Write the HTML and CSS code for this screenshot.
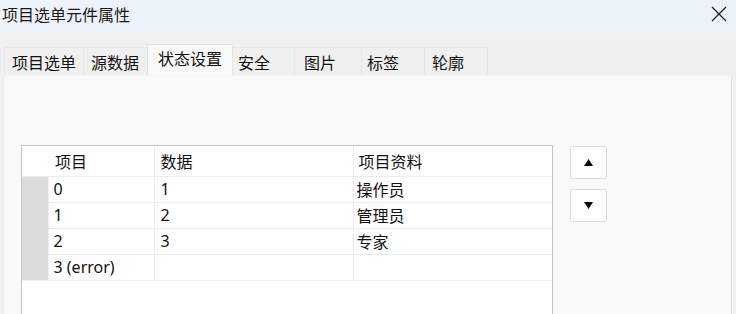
FILE: index.html
```html
<!DOCTYPE html>
<html lang="zh">
<head>
<meta charset="utf-8">
<link rel="stylesheet" href="styles.css">
</head>
<body>
<div class="window">
  <div class="titlebar">
    <span class="title">项目选单元件属性</span>
    <span class="close" aria-label="close">
      <svg width="16" height="16" viewBox="0 0 16 16"><path d="M1 1 L15 15 M15 1 L1 15" stroke="#1a1a1a" stroke-width="1.2" fill="none"/></svg>
    </span>
  </div>
  <div class="tabs">
    <div class="tab t1">项目选单</div>
    <div class="tab t2">源数据</div>
    <div class="tab t3 active">状态设置</div>
    <div class="tab t4">安全</div>
    <div class="tab t5">图片</div>
    <div class="tab t6">标签</div>
    <div class="tab t7">轮廓</div>
  </div>
  <div class="panel">
    <div class="grid-wrap">
      <table class="grid">
        <colgroup>
          <col class="c0"><col class="c1"><col class="c2"><col class="c3">
        </colgroup>
        <thead>
          <tr><th class="rh-blank"></th><th>项目</th><th>数据</th><th>项目资料</th></tr>
        </thead>
        <tbody>
          <tr><td class="rh"></td><td>0</td><td>1</td><td>操作员</td></tr>
          <tr><td class="rh"></td><td>1</td><td>2</td><td>管理员</td></tr>
          <tr><td class="rh"></td><td>2</td><td>3</td><td>专家</td></tr>
          <tr><td class="rh"></td><td>3 (error)</td><td></td><td></td></tr>
        </tbody>
      </table>
    </div>
    <div class="movers">
      <button class="mv"><svg width="9" height="7" viewBox="0 0 9 7"><path d="M4.5 0 L9 7 L0 7 Z" fill="#000"/></svg></button>
      <button class="mv"><svg width="9" height="7" viewBox="0 0 9 7"><path d="M0 0 L9 0 L4.5 7 Z" fill="#000"/></svg></button>
    </div>
  </div>
</div>
</body>
</html>
```

FILE: styles.css
```css
* { box-sizing: border-box; }
html, body {
  margin: 0;
  padding: 0;
  width: 736px;
  height: 314px;
  overflow: hidden;
  background: #f0f0f0;
  font-family: "Noto Sans", "Noto Sans CJK SC", sans-serif;
  color: #111;
}
.window {
  display: flex;
  flex-direction: column;
  height: 314px;
  overflow: hidden;
}
.titlebar {
  height: 33px;
  background: #edf3fa;
  display: flex;
  align-items: flex-start;
  justify-content: space-between;
  padding: 3px 9px 0 2px;
  flex: none;
}
.title {
  font-family: "Noto Sans CJK SC", sans-serif;
  font-size: 16px;
  line-height: 22px;
  color: #1a1a1a;
}
.close {
  display: block;
  width: 16px;
  height: 16px;
  margin-top: 3px;
}
.close svg { display: block; }
.tabs {
  display: flex;
  align-items: flex-end;
  padding-left: 4px;
  margin-top: 11px;
  height: 31px;
  flex: none;
}
.tab {
  font-family: "Noto Sans CJK SC", sans-serif;
  font-size: 16px;
  height: 28px;
  line-height: 28px;
  text-align: left;
  background: #f0f0f0;
  border-top: 1px solid #e6e6e6;
  border-right: 1px solid #e6e6e6;
  color: #111;
  padding-top: 0;
  white-space: nowrap;
}
.tab.t1 { width: 80px; border-left: 1px solid #e6e6e6; padding-left: 7px; }
.tab.t2 { width: 64px; padding-left: 7px; }
.tab.t3 { width: 85px; }
.tab.t4 { width: 62px; padding-left: 5px; }
.tab.t5 { width: 67px; padding-left: 9px; }
.tab.t6 { width: 63px; padding-left: 5px; }
.tab.t7 { width: 63px; padding-left: 7px; }
.tab.active {
  height: 31px;
  line-height: 27px;
  padding-left: 10px;
  background: #f9f9f9;
  border-top: 1px solid #e2e2e2;
  border-left: 1px solid #e2e2e2;
  margin-left: -1px;
  width: 86px;
}
.panel {
  flex: 1;
  margin-left: 4px;
  width: 728px;
  background: #f9f9f9;
  border-top: 1px solid #f5f5f5;
  border-right: 1px solid #e2e2e2;
  border-left: 1px solid #f5f5f5;
  display: flex;
  align-items: flex-start;
  padding: 69px 0 0 16px;
  min-height: 0;
}
.grid-wrap {
  width: 532px;
  height: 200px;
  background: #fff;
  border: 1px solid #c4c4c4;
  flex: none;
}
.grid {
  border-collapse: collapse;
  table-layout: fixed;
  width: 530px;
  font-size: 16px;
}
.c0 { width: 26px; }
.c1 { width: 106px; }
.c2 { width: 199px; }
.c3 { width: 199px; }
.grid th, .grid td {
  height: 26px;
  padding: 0 0 0 6px;
  text-align: left;
  font-weight: normal;
  border-right: 1px solid #ececec;
  border-bottom: 1px solid #ececec;
  white-space: nowrap;
  line-height: 24px;
  color: #111;
}
.grid th {
  height: 30px;
  padding-left: 6px;
  font-family: "Noto Sans CJK SC", sans-serif;
  line-height: 28px;
}
.grid th:nth-child(2) { padding-left: 7px; }
.grid td:nth-child(2) { padding-left: 5px; }
.grid td:nth-child(3), .grid th:nth-child(3) { padding-left: 6px; }
.grid td:nth-child(4) { padding-left: 3px; font-family: "Noto Sans CJK SC", sans-serif; }
.grid th:nth-child(4) { padding-left: 5px; }
.grid th.rh-blank { border-right: none; }
.grid td.rh {
  background: #dcdcdc;
  border-right: 1px solid #f0f0f0;
  border-bottom: 1px solid #dcdcdc;
  padding: 0;
}
.grid tbody tr:last-child td.rh { border-bottom-color: #f0f0f0; }
.grid th:last-child, .grid td:last-child { border-right: none; }
.movers {
  display: flex;
  flex-direction: column;
  gap: 10px;
  margin-left: 17px;
  margin-top: 1px;
}
.mv {
  width: 37px;
  height: 33px;
  background: #fff;
  border: 1px solid #dadada;
  border-radius: 3px;
  padding: 0;
  display: flex;
  align-items: center;
  justify-content: center;
}
.mv svg { display: block; }
```
